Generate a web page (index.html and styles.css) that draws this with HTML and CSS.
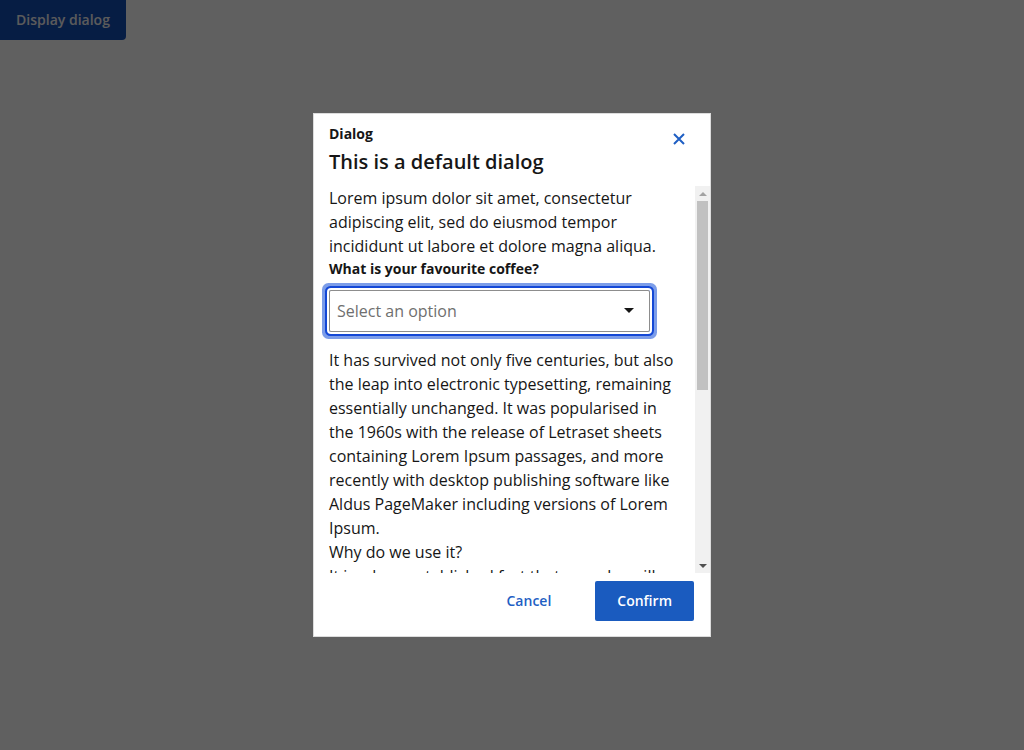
FILE: index.html
```html
<!DOCTYPE html>
<html lang="en">
<head>
<meta charset="utf-8">
<title>Dialog</title>
<link rel="stylesheet" href="styles.css">
</head>
<body>
<button class="open-btn" type="button">Display dialog</button>

<div class="overlay">
  <div class="dialog" role="dialog" aria-labelledby="dlg-title">
    <div class="dialog-header">
      <div class="titles">
        <div class="eyebrow">Dialog</div>
        <h2 class="title" id="dlg-title">This is a default dialog</h2>
      </div>
      <button class="close" type="button" aria-label="Close">
        <svg width="12" height="12" viewBox="0 0 12 12" aria-hidden="true">
          <path d="M1 1 L11 11 M11 1 L1 11" stroke="#1f5fc4" stroke-width="2" fill="none"/>
        </svg>
      </button>
    </div>

    <div class="scroll-row">
      <div class="scroll-content">
        <p class="text">Lorem ipsum dolor sit amet, consectetur adipiscing elit, sed do eiusmod tempor incididunt ut labore et dolore magna aliqua.</p>
        <div class="label">What is your favourite coffee?</div>
        <div class="select" role="combobox" aria-expanded="false">
          <span class="placeholder">Select an option</span>
          <svg class="caret" width="10" height="5" viewBox="0 0 10 5" aria-hidden="true">
            <path d="M0 0 H10 L5 5 Z" fill="#161616"/>
          </svg>
        </div>
        <p class="text">It has survived not only five centuries, but also the leap into electronic typesetting, remaining essentially unchanged. It was popularised in the 1960s with the release of Letraset sheets containing Lorem Ipsum passages, and more recently with desktop publishing software like Aldus PageMaker including versions of Lorem Ipsum.</p>
        <p class="text">Why do we use it?</p>
        <p class="text">It is a long established fact that a reader will be distracted by the readable content of a page when looking at its layout.</p>
      </div>
      <div class="scrollbar" aria-hidden="true">
        <div class="sb-btn"><span class="tri-up"></span></div>
        <div class="sb-track"><div class="sb-thumb"></div></div>
        <div class="sb-btn"><span class="tri-down"></span></div>
      </div>
    </div>

    <div class="dialog-footer">
      <button class="btn btn-ghost" type="button">Cancel</button>
      <button class="btn btn-primary" type="button">Confirm</button>
    </div>
  </div>
</div>
</body>
</html>
```

FILE: styles.css
```css
* { box-sizing: border-box; }

html, body {
  margin: 0;
  padding: 0;
  height: 100%;
}

body {
  background: #ffffff;
  font-family: "Open Sans", "Noto Sans", sans-serif;
  color: #161616;
}

.open-btn {
  display: block;
  margin: 0;
  width: 126px;
  height: 40px;
  border: none;
  border-radius: 0 0 4px 0;
  background: #124db6;
  color: #f2f2f2;
  font-family: inherit;
  font-size: 14px;
  line-height: 20px;
  font-weight: 600;
  padding: 0 16px;
}

.overlay {
  position: fixed;
  inset: 0;
  background: rgba(0, 0, 0, 0.624);
  display: flex;
  align-items: center;
  justify-content: center;
}

.dialog {
  width: 398px;
  background: #ffffff;
  border: 1px solid #dcdcdc;
  display: flex;
  flex-direction: column;
}

.dialog-header {
  display: flex;
  justify-content: space-between;
  align-items: flex-start;
  padding: 10px 15px 0 15px;
}

.eyebrow {
  font-size: 14px;
  line-height: 20px;
  font-weight: 700;
}

.title {
  margin: 6px 0 0 0;
  font-size: 20px;
  line-height: 24px;
  font-weight: 600;
}

.close {
  width: 32px;
  height: 32px;
  margin-top: -1px;
  border: none;
  background: transparent;
  padding: 0;
  display: flex;
  align-items: center;
  justify-content: center;
}

.scroll-row {
  margin-top: 12px;
  margin-left: 7px;
  height: 387px;
  display: flex;
}

.scroll-content {
  flex: 1;
  overflow: hidden;
  padding: 0 17px 0 8px;
}

.text {
  margin: 0;
  font-size: 16px;
  line-height: 24px;
}

.label {
  margin-top: 1px;
  font-size: 14px;
  line-height: 20px;
  font-weight: 700;
}

.select {
  margin: 11px 0 16px 0;
  width: 321px;
  height: 42px;
  border: 1px solid #8d8d8d;
  border-radius: 2px;
  display: flex;
  align-items: center;
  justify-content: space-between;
  padding: 0 15px 1px 7px;
  box-shadow: 0 0 0 2px #ffffff, 0 0 0 4px #1448d6, 0 0 0 7px #7c9de9;
}

.placeholder {
  font-size: 16px;
  color: #6f6f6f;
}

.caret { display: block; }

.scrollbar {
  width: 15px;
  background: #f1f1f1;
  display: flex;
  flex-direction: column;
}

.sb-btn {
  height: 15px;
  display: flex;
  align-items: center;
  justify-content: center;
}

.tri-up, .tri-down {
  width: 0;
  height: 0;
  border-left: 4px solid transparent;
  border-right: 4px solid transparent;
}

.tri-up { border-bottom: 4px solid #a3a3a3; }
.tri-down { border-top: 4px solid #505050; }

.sb-track {
  flex: 1;
  padding: 0 2px;
}

.sb-thumb {
  height: 189px;
  background: #c1c1c1;
}

.dialog-footer {
  display: flex;
  justify-content: flex-end;
  gap: 22px;
  padding: 8px 16px 15px 15px;
}

.btn {
  height: 40px;
  border: none;
  border-radius: 2px;
  font-family: inherit;
  font-size: 14px;
  line-height: 20px;
  font-weight: 600;
  padding: 0 22px;
}

.btn-ghost {
  background: transparent;
  color: #1f5fc4;
}

.btn-primary {
  background: #1a5bbf;
  color: #ffffff;
}
```
